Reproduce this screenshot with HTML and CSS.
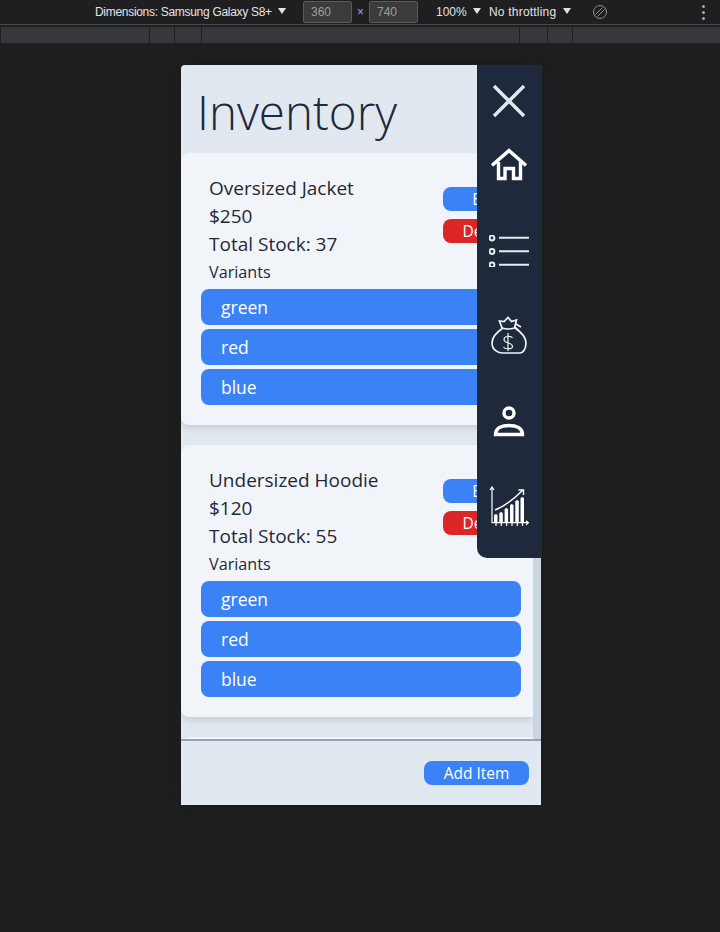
FILE: index.html
```html
<!DOCTYPE html>
<html lang="en">
<head>
    <meta charset="UTF-8">
    <meta name="viewport" content="width=device-width, initial-scale=1.0">
    <title>Inventory</title>
    <link rel="stylesheet" href="styles.css">
</head>
<body>
    <div class="devbar">
        <span class="devbar-device">Dimensions: Samsung Galaxy S8+ <i class="caret"></i></span>
        <span class="dim-box dim-first">360</span>
        <span class="dim-x">×</span>
        <span class="dim-box">740</span>
        <span class="devbar-zoom">100% <i class="caret"></i></span>
        <span class="devbar-throttle">No throttling <i class="caret"></i></span>
        <svg class="rotate-icon" width="16" height="16" viewBox="0 0 16 16" fill="none" stroke="#8a8c90" stroke-width="1">
            <circle cx="8" cy="8" r="6.5"/>
            <path d="M3.5 10.5 10.5 3.5M5.5 12.5 12.5 5.5"/>
        </svg>
        <span class="dots"><i></i><i></i><i></i></span>
    </div>
    <div class="ruler">
        <span></span><span></span><span></span><span></span><span></span><span></span><span></span>
    </div>

    <div class="stage">
        <div class="phone">
            <header class="page-head">
                <h1>Inventory</h1>
            </header>

            <div class="list-wrap">
                <div class="list">
                    <section class="card">
                        <div class="card-top">
                            <div class="card-info">
                                <p>Oversized Jacket</p>
                                <p>$250</p>
                                <p>Total Stock: 37</p>
                                <p class="variants-label">Variants</p>
                            </div>
                            <div class="card-actions">
                                <button class="btn btn-blue">Edit</button>
                                <button class="btn btn-red">Delete</button>
                            </div>
                        </div>
                        <button class="variant">green</button>
                        <button class="variant">red</button>
                        <button class="variant">blue</button>
                    </section>

                    <section class="card">
                        <div class="card-top">
                            <div class="card-info">
                                <p>Undersized Hoodie</p>
                                <p>$120</p>
                                <p>Total Stock: 55</p>
                                <p class="variants-label">Variants</p>
                            </div>
                            <div class="card-actions">
                                <button class="btn btn-blue">Edit</button>
                                <button class="btn btn-red">Delete</button>
                            </div>
                        </div>
                        <button class="variant">green</button>
                        <button class="variant">red</button>
                        <button class="variant">blue</button>
                    </section>

                    <section class="card"></section>
                </div>
                <div class="scroll-track"></div>
            </div>

            <footer class="page-foot">
                <button class="btn btn-blue add-btn">Add Item</button>
            </footer>

            <nav class="drawer">
                <svg class="nav-close" width="36" height="36" viewBox="0 0 36 36" fill="none" stroke="#e2e8f0" stroke-width="3.4">
                    <path d="M3 3 33 33M33 3 3 33"/>
                </svg>
                <svg class="nav-home" width="36" height="36" viewBox="0 0 36 36" fill="none" stroke="#fff" stroke-width="3.4">
                    <path d="M1 17.500 18 2.500 35 17.500"/>
                    <path d="M7.500 14V30.500H14V20.500H22.500V30.500H29.500V14"/>
                </svg>
                <svg class="nav-list" width="40" height="32" viewBox="0 0 40 32" fill="none" stroke="#e8ebef" stroke-width="2">
                    <circle cx="3" cy="3" r="2.400"/>
                    <circle cx="3" cy="16.500" r="2.400"/>
                    <circle cx="3" cy="29.800" r="2.400"/>
                    <path d="M10 2.800H40M10 16.300H40M10 29.800H40"/>
                </svg>
                <svg class="nav-bag" width="36" height="38" viewBox="0 0 36 38" fill="none" stroke="#f1f5f9" stroke-width="1.700">
                    <path d="M11 12 8.500 5 13 5.500 17 1.500 20.500 5.500 25.500 4 23.500 12Q17 14 11 12Z"/>
                    <path d="M12 12C6 16 1 21 1 27 1 34 7 37 12 37H29C32 37 35 33 35 27 35 21 30 16 24 12"/>
                    <path d="M25 8 30 11M24 11 28 15"/>
                    <path d="M21.500 22C20.500 20 13 19.500 13 23.500 13 28 21.500 26 21.500 30.500 21.500 33.500 14 33.500 12.500 31M17 17V35" stroke-width="1.200"/>
                </svg>
                <svg class="nav-person" width="32" height="32" viewBox="0 0 32 32" fill="none" stroke="#fff" stroke-width="3.400">
                    <circle cx="16" cy="7" r="5"/>
                    <path d="M2.500 28.500C2.500 22 9 19.500 16 19.500 23 19.500 29.500 22 29.500 28.500Z"/>
                </svg>
                <svg class="nav-chart" width="42" height="42" viewBox="0 0 42 42" fill="none" stroke="#fff" stroke-width="1.200">
                    <path d="M3 1V36.700H39"/>
                    <path d="M1 4 3 1 5 4M37 34.700 39.500 36.700 37 38.700"/>
                    <path d="M6 24C16 20 25 13 34 4M29.500 4H34.500V9" stroke-width="1.400"/>
                    <path d="M7 40V36M12.300 40V36M17.600 40V36M23 40V36M28.300 40V36M33.500 40V36"/>
                    <path d="M5 29 7 28 8.500 29V37H5ZM10.300 27 12 26 13.800 27V37H10.300ZM15.600 23 17.400 22 19.100 23V37H15.600ZM21 19 22.800 18 24.500 19V37H21ZM26.300 15 28 14 29.800 15V37H26.300ZM31.500 12 33.300 11 35 12V37H31.500Z" fill="#fff" stroke="none"/>
                </svg>
            </nav>
        </div>
    </div>
</body>
</html>
```

FILE: styles.css
```css
* {
    box-sizing: border-box;
}

body {
    margin: 0;
    height: 932px;
    overflow: hidden;
    background-color: #1f1f21;
    font-family: "Open Sans", "Noto Sans", Arial, sans-serif;
    color: #1f2937;
}

/* devtools toolbar */
.devbar {
    height: 25px;
    padding-left: 95px;
    display: flex;
    align-items: center;
    border-bottom: 1px solid #47494d;
    font-family: "Liberation Sans", Arial, sans-serif;
    font-size: 12px;
    color: #e3e3e3;
    white-space: nowrap;
}

.caret {
    display: inline-block;
    margin-left: 3px;
    vertical-align: 2px;
    border-left: 4px solid transparent;
    border-right: 4px solid transparent;
    border-top: 6px solid #e3e3e3;
}

.devbar-device {
    width: 208px;
    letter-spacing: -0.3px;
}

.dim-box {
    width: 49px;
    height: 22px;
    padding-left: 7px;
    line-height: 20px;
    background-color: #3b3b3b;
    border: 1px solid #5a5a5a;
    border-radius: 2px;
    color: #9c9c9c;
}

.dim-x {
    width: 17px;
    text-align: center;
    color: #8ab4d8;
}

.devbar-zoom {
    margin-left: 18px;
    width: 53px;
}

.devbar-throttle {
    width: 103px;
    letter-spacing: 0.2px;
}

.rotate-icon {
    margin-right: 94px;
}

.dots {
    display: flex;
    flex-direction: column;
    gap: 3px;
}

.dots i {
    width: 3px;
    height: 3px;
    border-radius: 50%;
    background-color: #a8a8a8;
}

.ruler {
    height: 16px;
    margin-top: 2px;
    padding-left: 1px;
    display: grid;
    grid-template-columns: 148px 24px 26px 317px 27px 24px 1fr;
    gap: 1px;
}

.ruler span {
    background-color: #36383c;
}

/* device area */
.stage {
    display: flex;
    justify-content: center;
    padding-top: 22px;
}

.phone {
    position: relative;
    width: 360px;
    height: 740px;
    margin-left: 2px;
    display: flex;
    flex-direction: column;
    background-color: #e2e8f0;
    border-top-left-radius: 4px;
    box-shadow: 0 0 20px #1b1b1d;
}

.page-head {
    height: 88px;
    padding-left: 16px;
    flex-shrink: 0;
}

.page-head h1 {
    margin: 0;
    font-size: 47.500px;
    font-weight: 300;
    line-height: 94px;
    color: #1e293b;
}

.list-wrap {
    height: 586px;
    display: flex;
    flex-shrink: 0;
}

.list {
    flex: 1;
    overflow: hidden;
}

.scroll-track {
    width: 8px;
    background-color: #cbd5e1;
}

.card {
    height: 272px;
    margin-bottom: 20px;
    padding: 20px 4px 20px 20px;
    background-color: #f1f5f9;
    border-radius: 8px 0 0 8px;
    box-shadow: 0 4px 6px rgba(0, 0, 0, 0.1);
}

.card-top {
    display: flex;
    justify-content: space-between;
    height: 116px;
}

.card-info {
    padding: 1px 0 0 8px;
}

.card-info p {
    margin: 0;
    font-size: 19px;
    line-height: 28px;
}

.card-info .variants-label {
    font-size: 16.200px;
}

.card-actions {
    width: 86px;
    padding-top: 14px;
    display: flex;
    flex-direction: column;
    gap: 8px;
}

.btn {
    height: 24px;
    padding: 0;
    border: none;
    border-radius: 8px;
    font-family: inherit;
    font-size: 15.500px;
    color: #fff;
}

.btn-blue {
    background-color: #3b82f6;
}

.btn-red {
    background-color: #dc2626;
}

.variant {
    display: block;
    width: 320px;
    height: 36px;
    margin-bottom: 4px;
    padding: 0 0 0 20px;
    border: none;
    border-radius: 8px;
    background-color: #3b82f6;
    font-family: inherit;
    font-size: 17.500px;
    color: #fff;
    text-align: left;
}

.page-foot {
    flex: 1;
    padding: 20px 12px 0 0;
    display: flex;
    justify-content: flex-end;
    align-items: flex-start;
    border-top: 2px solid #94a3b8;
}

.add-btn {
    width: 105px;
}

/* side drawer sits over the page */
.drawer {
    position: absolute;
    top: 0;
    right: -1px;
    width: 65px;
    height: 493px;
    background-color: #1e293b;
    border-bottom-left-radius: 10px;
}

.drawer svg {
    position: absolute;
}

.nav-close {
    left: 14px;
    top: 18px;
}

.nav-home {
    left: 14px;
    top: 83px;
}

.nav-list {
    left: 12px;
    top: 170px;
}

.nav-bag {
    left: 14px;
    top: 251px;
}

.nav-person {
    left: 16px;
    top: 341px;
}

.nav-chart {
    left: 12px;
    top: 421px;
}
```
